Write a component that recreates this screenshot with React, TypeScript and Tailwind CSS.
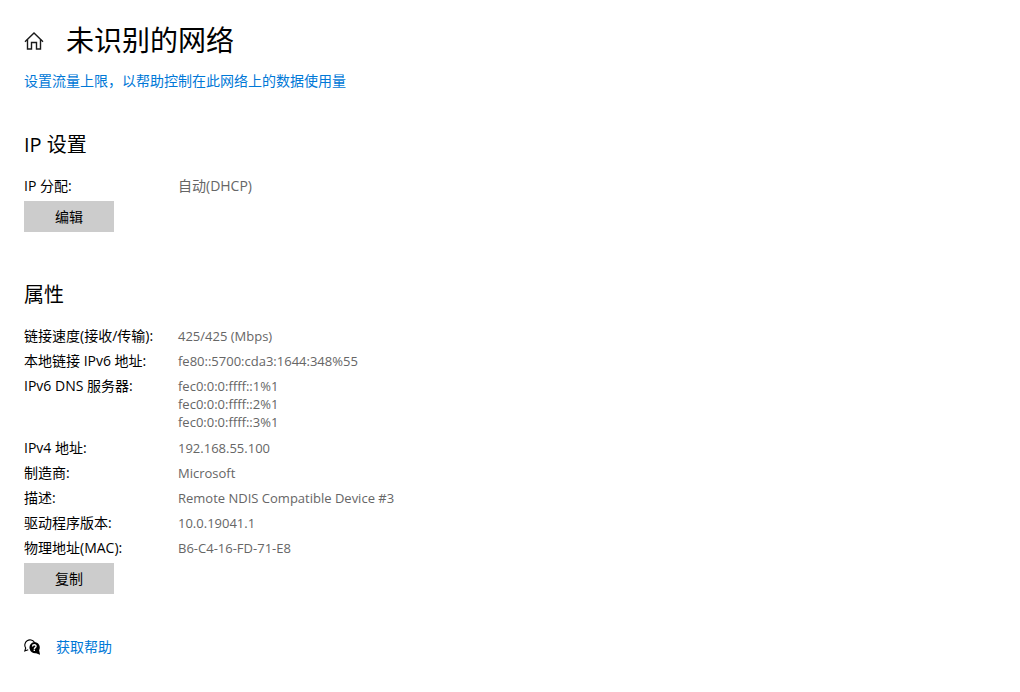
import type { ReactNode } from 'react';

type Property = { label: string; value: string | string[] };

const IP_SETTINGS: Property[] = [{ label: 'IP 分配:', value: '自动(DHCP)' }];

const PROPERTIES: Property[] = [
  { label: '链接速度(接收/传输):', value: '425/425 (Mbps)' },
  { label: '本地链接 IPv6 地址:',   value: 'fe80::5700:cda3:1644:348%55' },
  { label: 'IPv6 DNS 服务器:',      value: ['fec0:0:0:ffff::1%1', 'fec0:0:0:ffff::2%1', 'fec0:0:0:ffff::3%1'] },
  { label: 'IPv4 地址:',            value: '192.168.55.100' },
  { label: '制造商:',               value: 'Microsoft' },
  { label: '描述:',                 value: 'Remote NDIS Compatible Device #3' },
  { label: '驱动程序版本:',         value: '10.0.19041.1' },
  { label: '物理地址(MAC):',        value: 'B6-C4-16-FD-71-E8' },
];

function HomeIcon() {
  return (
    <svg width="20" height="20" viewBox="0 0 20 20" fill="none" stroke="#1a1a1a" strokeWidth="1.4" aria-hidden="true">
      <path d="M1 10.8 10 2l9 8.8" />
      <path d="M3.5 8.6v9.4h4v-6.5h5V18h4V8.6" />
    </svg>
  );
}

function HelpIcon() {
  return (
    <svg width="16" height="16" viewBox="0 0 16 16" fill="none" aria-hidden="true">
      <path d="M4.2 10.8 .8 12l.9-3A5 5 0 1 1 10.4 3.2" stroke="#000" strokeWidth="1.1" />
      <path d="M10.2 3a5.6 5.6 0 0 1 4.9 8.3l1 4.4-4-1.5A5.6 5.6 0 1 1 10.2 3Z" fill="#000" />
      <path d="M8.5 7.4c0-2.2 3.6-2.2 3.6-.1 0 1.3-1.8 1.3-1.8 2.6" stroke="#fff" strokeWidth="1.3" />
      <path d="M9.6 10.6h1.4v1.4H9.6z" fill="#fff" />
    </svg>
  );
}

function PropertyList({ items, valueSize }: { items: Property[]; valueSize: string }) {
  return (
    <dl className="flex flex-col gap-[7px]">
      {items.map(({ label, value }) => (
        <div key={label} className="grid grid-cols-[154px_1fr]">
          <dt>{label}</dt>
          <dd className={`${valueSize} text-[#666666]`}>
            {Array.isArray(value) ? (
              <ul className="pb-px">
                {value.map((v) => <li key={v}>{v}</li>)}
              </ul>
            ) : value}
          </dd>
        </div>
      ))}
    </dl>
  );
}

function Section({
  title,
  items,
  action,
  valueSize = 'text-[13px]',
}: {
  title: string;
  items: Property[];
  action: ReactNode;
  valueSize?: string;
}) {
  return (
    <section>
      <h2 className="mb-[17px] text-xl leading-[30px]">{title}</h2>
      <PropertyList items={items} valueSize={valueSize} />
      <button className="mt-[6px] h-[31px] w-[90px] bg-[#cccccc] hover:bg-[#bdbdbd]">{action}</button>
    </section>
  );
}

export default function App() {
  return (
    <main className="min-h-screen bg-white px-6 pt-[23px] pb-9 font-['Open_Sans','Noto_Sans_CJK_SC',sans-serif] text-sm leading-[18px] text-black">
      <header className="mb-10">
        <div className="mb-[13px] flex items-center gap-[22px]">
          <a href="#home" aria-label="主页"><HomeIcon /></a>
          <h1 className="pb-[2px] text-[28px] leading-[34px]">未识别的网络</h1>
        </div>
        <a href="#data-limit" className="block w-fit text-[#0078d7]">
          设置流量上限，以帮助控制在此网络上的数据使用量
        </a>
      </header>

      <div className="flex flex-col gap-12">
        <Section title="IP 设置" items={IP_SETTINGS} action="编辑" valueSize="text-[14px]" />
        <Section title="属性" items={PROPERTIES} action="复制" />
      </div>

      <footer className="mt-11 flex items-center gap-4">
        <HelpIcon />
        <a href="#help" className="text-[#0078d7]">获取帮助</a>
      </footer>
    </main>
  );
}
